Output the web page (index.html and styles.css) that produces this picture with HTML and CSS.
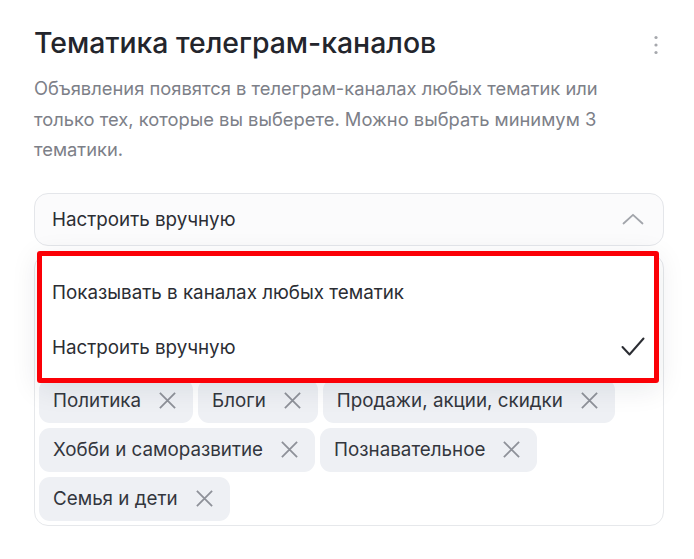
FILE: index.html
```html
<!DOCTYPE html>
<html lang="ru">
<head>
<meta charset="utf-8">
<link rel="stylesheet" href="styles.css">
</head>
<body>
<div class="panel">
  <div class="head">
    <h1 class="title">Тематика телеграм-каналов</h1>
    <button class="more" aria-label="Ещё">
      <svg width="4" height="20" viewBox="0 0 4 20"><circle cx="2" cy="2.5" r="1.6"/><circle cx="2" cy="10" r="1.6"/><circle cx="2" cy="17.5" r="1.6"/></svg>
    </button>
  </div>
  <p class="desc">Объявления появятся в телеграм-каналах любых тематик или только тех, которые вы выберете. Можно выбрать минимум 3 тематики.</p>
  <div class="picker">
    <div class="select">
      <span>Настроить вручную</span>
      <svg class="chev" width="22" height="12" viewBox="0 0 22 12"><path d="M1.5 10.5 L11 1.8 L20.5 10.5" fill="none" stroke="#a2a5ab" stroke-width="1.8" stroke-linecap="round" stroke-linejoin="round"/></svg>
    </div>
    <div class="tags">
      <span class="chip">Политика<svg class="x" viewBox="0 0 20 20"><path d="M2 2 L18 18 M18 2 L2 18"/></svg></span>
      <span class="chip">Блоги<svg class="x" viewBox="0 0 20 20"><path d="M2 2 L18 18 M18 2 L2 18"/></svg></span>
      <span class="chip">Продажи, акции, скидки<svg class="x" viewBox="0 0 20 20"><path d="M2 2 L18 18 M18 2 L2 18"/></svg></span>
      <span class="chip">Хобби и саморазвитие<svg class="x" viewBox="0 0 20 20"><path d="M2 2 L18 18 M18 2 L2 18"/></svg></span>
      <span class="chip">Познавательное<svg class="x" viewBox="0 0 20 20"><path d="M2 2 L18 18 M18 2 L2 18"/></svg></span>
      <span class="chip">Семья и дети<svg class="x" viewBox="0 0 20 20"><path d="M2 2 L18 18 M18 2 L2 18"/></svg></span>
    </div>
    <div class="dropdown">
      <div class="option">Показывать в каналах любых тематик</div>
      <div class="option">Настроить вручную
        <svg class="check" width="24" height="20" viewBox="0 0 24 20"><path d="M1.5 10 L8.5 17.5 L22.5 1.5" fill="none" stroke="#2b2d33" stroke-width="2" stroke-linecap="round" stroke-linejoin="round"/></svg>
      </div>
    </div>
  </div>
</div>
</body>
</html>
```
FILE: styles.css
```css
* { box-sizing: border-box; }
html, body { margin: 0; padding: 0; background: #ffffff; }
body {
  font-family: Inter, "Noto Sans", "Liberation Sans", sans-serif;
  color: #2b2d33;
}
.panel {
  padding: 25px 30px 0 34px;
}
.head {
  display: flex;
  align-items: flex-start;
  justify-content: space-between;
}
.title {
  margin: 0;
  font-size: 28.4px;
  line-height: 36px;
  font-weight: 500;
  color: #23252c;
}
.more {
  border: 0;
  background: none;
  padding: 0;
  margin: 8px -4px 0 0;
  width: 24px;
  height: 24px;
  display: flex;
  justify-content: center;
  align-items: center;
  fill: #a6a8ad;
}
.desc {
  margin: 12px 0 0 0;
  max-width: 592px;
  font-size: 18.35px;
  line-height: 30.5px;
  color: #7d8088;
}
.picker {
  position: relative;
  margin-top: 28px;
}
.select {
  height: 53px;
  border: 1px solid #e4e6ea;
  border-radius: 14px;
  background: #fbfbfc;
  display: flex;
  align-items: center;
  justify-content: space-between;
  padding: 0 19px 0 17px;
  font-size: 18.8px;
  color: #2b2d33;
}
.tags {
  margin-top: 8px;
  border: 1px solid #e6e8eb;
  border-radius: 14px;
  padding: 124px 4px 4px 4px;
  display: flex;
  flex-wrap: wrap;
  gap: 5px;
}
.chip {
  height: 44px;
  display: inline-flex;
  align-items: center;
  padding: 0 16px 0 14px;
  background: #eef0f4;
  border-radius: 11px;
  font-size: 18.8px;
  color: #33363d;
}
.x {
  width: 19px;
  height: 19px;
  margin-left: 17px;
  stroke: #8e9199;
  stroke-width: 1.9;
  fill: none;
}
.dropdown {
  position: absolute;
  top: 58px;
  left: 3px;
  width: 622px;
  height: 132px;
  background: #ffffff;
  border: 5px solid #fb0006;
  border-radius: 3px;
  box-shadow: 0 6px 28px rgba(20, 30, 50, 0.09);
  padding-top: 9px;
}
.option {
  height: 55px;
  display: flex;
  align-items: center;
  justify-content: space-between;
  padding: 0 9px 0 10px;
  font-size: 18.8px;
  color: #2b2d33;
}
```
